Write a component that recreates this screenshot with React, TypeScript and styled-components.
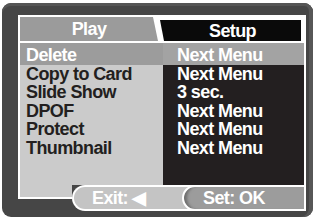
import React from "react";
import styled, { createGlobalStyle } from "styled-components";

const GlobalStyle = createGlobalStyle`
  html, body {
    margin: 0;
    padding: 0;
    background: #ffffff;
  }
  body {
    font-family: "Liberation Sans", Arial, Helvetica, sans-serif;
    font-weight: 700;
  }
`;

type MenuItem = { label: string; value: string };

const items: MenuItem[] = [
  { label: "Delete", value: "Next Menu" },
  { label: "Copy to Card", value: "Next Menu" },
  { label: "Slide Show", value: "3 sec." },
  { label: "DPOF", value: "Next Menu" },
  { label: "Protect", value: "Next Menu" },
  { label: "Thumbnail", value: "Next Menu" },
];

const App: React.FC = () => {
  const selected = 0;

  return (
    <>
      <GlobalStyle />
      <Frame>
        <Screen>
          <Header>
            <PlayTab>Play</PlayTab>
            <SetupTab>Setup</SetupTab>
          </Header>
          <Body>
            {items.map((item, i) => (
              <Row key={item.label} $active={i === selected} $first={i === 0}>
                <Label $active={i === selected}>{item.label}</Label>
                <Value $active={i === selected}>{item.value}</Value>
              </Row>
            ))}
          </Body>
        </Screen>
        <Footer>
          <FooterEdge />
          <ExitPill>Exit: ◀</ExitPill>
          <SetPill>Set: OK</SetPill>
        </Footer>
      </Frame>
    </>
  );
};

const Frame = styled.div`
  width: 311px;
  height: 214px;
  margin: 3px 0 0 2px;
  box-sizing: border-box;
  padding: 12px 7px 6px 16px;
  background: #464646;
  border-radius: 9px;
  box-shadow: inset -4px 0 0 #575757, inset 0 3px 0 #555555;
  display: flex;
  flex-direction: column;
  font-size: 18px;
  letter-spacing: -0.6px;
`;

const Screen = styled.div`
  border: 2px solid #ffffff;
  border-bottom: none;
  display: flex;
  flex-direction: column;
`;

const Header = styled.div`
  display: flex;
  height: 24px;
  background: #ffffff;
  border-bottom: 2px solid #ffffff;
`;

const PlayTab = styled.div`
  flex: 0 0 138px;
  background: #9b9b9b;
  clip-path: polygon(0 0, 133px 0, 100% 100%, 0 100%);
  color: #ffffff;
  line-height: 25px;
  text-align: center;
`;

const SetupTab = styled.div`
  flex: 1;
  margin: 3px 3px 0 2px;
  background: #0a0a0a;
  clip-path: polygon(0 0, 100% 0, 100% 100%, 4px 100%);
  color: #ffffff;
  line-height: 22px;
  text-align: center;
  padding-left: 4px;
`;

const Body = styled.div`
  height: 142px;
  display: flex;
  flex-direction: column;
  background: linear-gradient(to right, #cbcbcb 0 143px, #231f20 143px);
`;

const Row = styled.div<{ $active: boolean; $first: boolean }>`
  display: grid;
  grid-template-columns: 143px 1fr;
  padding-top: ${(p) => (p.$first ? "3px" : "0")};
  background: ${(p) =>
    p.$active
      ? "linear-gradient(to right, #9c9c9c 0 143px, #a3a3a3 143px)"
      : "transparent"};
  line-height: 18.5px;
  white-space: nowrap;
`;

const Label = styled.div<{ $active: boolean }>`
  padding-left: 6px;
  color: ${(p) => (p.$active ? "#ffffff" : "#231f20")};
`;

const Value = styled.div<{ $active: boolean }>`
  padding-left: 14px;
  color: #ffffff;
`;

const Footer = styled.div`
  display: flex;
  height: 26px;
`;

const FooterEdge = styled.div`
  flex: 0 0 54px;
  background:
    linear-gradient(#ffffff, #ffffff) left top / 2px 14px no-repeat,
    linear-gradient(to bottom, #cbcbcb 0 12px, #ffffff 12px 14px, transparent 14px);
`;

const ExitPill = styled.div`
  flex: 0 0 130px;
  box-sizing: border-box;
  margin-right: -20px;
  border: 2px solid #ffffff;
  border-right: none;
  border-radius: 13px 0 0 13px;
  background: #c4c4c4;
  color: #ffffff;
  line-height: 22px;
  padding-left: 18px;
  white-space: nowrap;
`;

const SetPill = styled.div`
  flex: 1;
  box-sizing: border-box;
  border: 2px solid #ffffff;
  border-radius: 13px 0 0 13px;
  background: #9c9c9c;
  box-shadow: inset 5px 0 3px -2px #6e6e6e;
  color: #ffffff;
  line-height: 22px;
  padding-left: 19px;
  white-space: nowrap;
`;

export default App;
